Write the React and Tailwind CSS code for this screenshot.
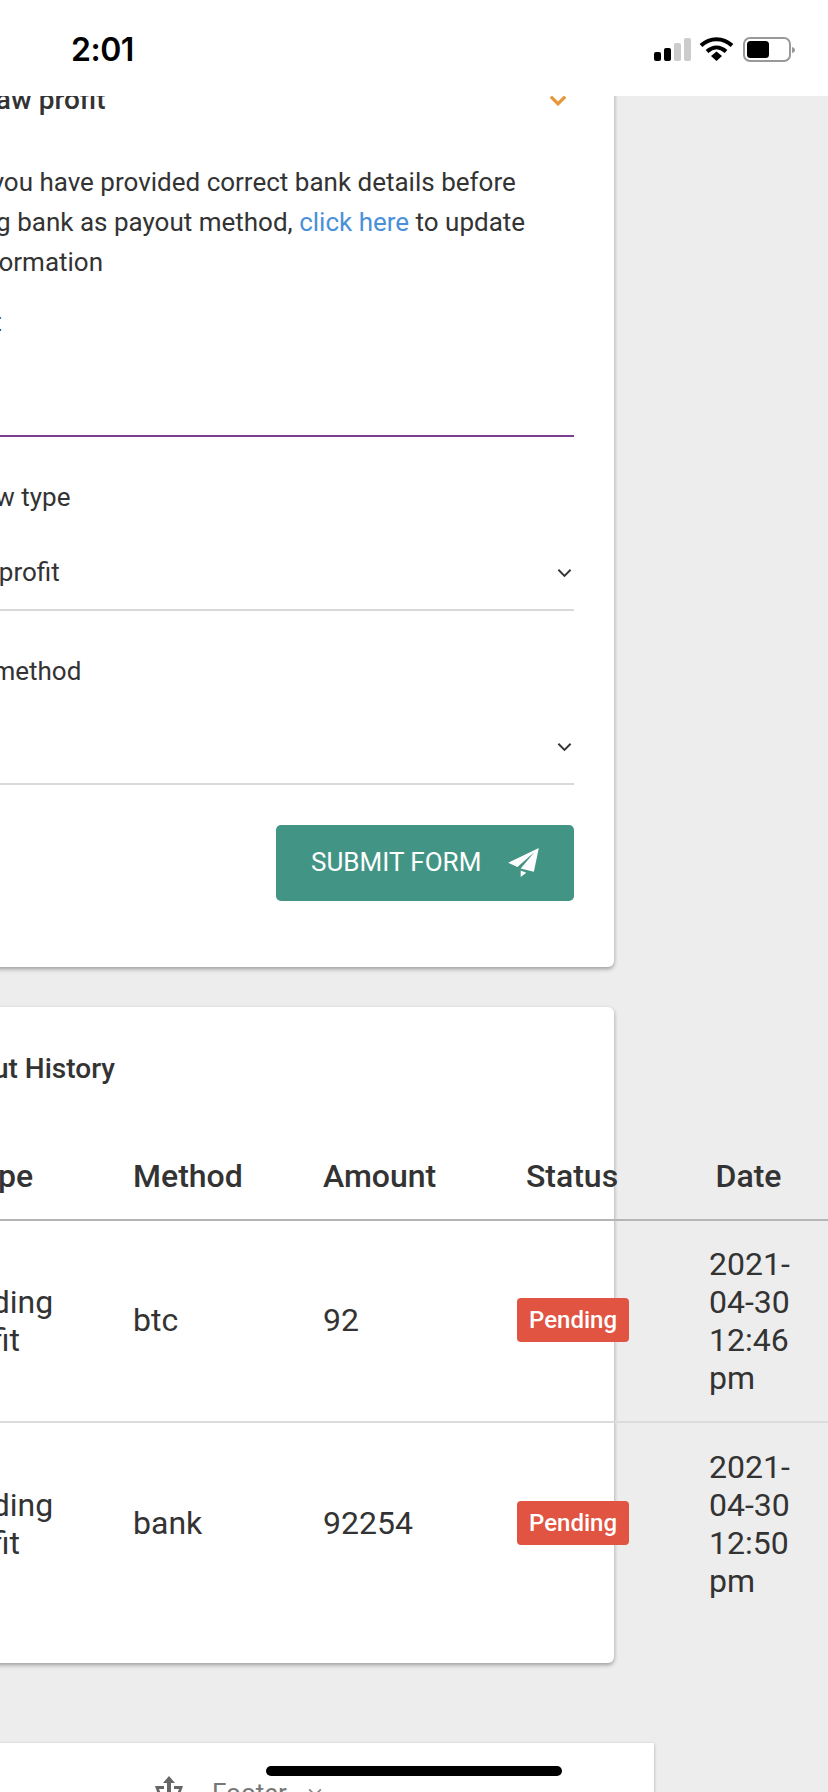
import React from 'react';

const rows = [
  { method: 'btc', amount: '92', time: '12:46' },
  { method: 'bank', amount: '92254', time: '12:50' },
];

function Chevron({ className, strokeWidth = 2 }) {
  return (
    <svg viewBox="0 0 16 10" className={className} fill="none" stroke="currentColor" strokeWidth={strokeWidth}>
      <path d="M1.5 1.5L8 8l6.5-6.5" />
    </svg>
  );
}

function SelectField({ label, value }) {
  return (
    <div>
      <div className="mt-[40px] text-[26px] leading-[40px]">{label}</div>
      <div className="mt-[35px] flex h-[40px] items-center justify-between text-[26px]">
        <span className="ml-[-8px]">{value}</span>
        <Chevron className="mt-[2px] mr-[2px] h-[10px] w-[15px]" />
      </div>
      <div className="mt-[17px] h-[2px] bg-[#d9d9d9]" />
    </div>
  );
}

function StatusBar() {
  return (
    <div className="absolute top-0 left-0 z-10 flex h-[96px] w-full items-start justify-between bg-white pl-[71px] pr-[32px]">
      <span className="mt-[29px] font-['Inter',sans-serif] text-[32px] leading-[42px] font-semibold tracking-[-0.5px] text-black">2:01</span>
      <svg viewBox="0 0 142 26" className="mt-[37px] h-[26px] w-[142px]">
        <rect x="0" y="15" width="7" height="9" rx="2" fill="#000" />
        <rect x="10" y="11" width="7" height="13" rx="2" fill="#000" />
        <rect x="20" y="6" width="7" height="18" rx="2" fill="#ccc" />
        <rect x="30" y="1" width="7" height="23" rx="2" fill="#ccc" />
        <path d="M47 8.5C56 0 69 0 78 8.5" fill="none" stroke="#000" strokeWidth="4" />
        <path d="M53 14.5C59 9 66 9 72 14.5" fill="none" stroke="#000" strokeWidth="4" />
        <path d="M57 19L62.5 14.5L68 19L62.5 24Z" fill="#000" />
        <rect x="90" y="1" width="46" height="23" rx="6" fill="#fff" stroke="#999" strokeWidth="2" />
        <rect x="93" y="4" width="22" height="17" rx="3.5" fill="#000" />
        <path d="M138 10c2 .5 3 1.5 3 3s-1 2.500-3 3z" fill="#999" />
      </svg>
    </div>
  );
}

export default function App() {
  return (
    <div className="relative h-[1792px] w-[828px] overflow-hidden bg-[#ededed] font-['Roboto',sans-serif] text-[#333]">
      <StatusBar />

      <div className="ml-[-200px] pt-[40px]">
        {/* Withdraw form */}
        <div className="w-[814px] rounded-[6px] bg-white pt-[40px] pr-[40px] pb-[66px] pl-[106px] shadow-[0_2px_4px_rgba(0,0,0,0.35)]">
          <div className="flex h-[40px] items-center justify-between">
            <span className="ml-[8px] text-[28px] font-medium">Withdraw profit</span>
            <Chevron className="mr-[7px] h-[11px] w-[18px] text-[#e8963a]" strokeWidth={3} />
          </div>

          <p className="mt-[42px] text-[26px] leading-[40px]">
            Ensure you have provided correct bank details before
            <br />
            selecting bank as payout method, <a className="text-[#4a90d9]">click here</a> to update
            <br />
            bank information
          </p>

          <div className="mt-[20px] ml-[4px] text-[26px] leading-[40px]">Amount</div>
          <div className="h-[95px] border-b-2 border-[#7b3f8f]" />

          <SelectField label="Withdraw type" value="Pending profit" />
          <SelectField label="Payout method" value="" />

          <div className="mt-[40px] flex justify-end">
            <button className="flex h-[76px] w-[298px] items-center justify-between rounded-[5px] bg-[#429585] pr-[35px] pb-[2px] pl-[35px] text-[26px] text-white">
              SUBMIT FORM
              <svg viewBox="0 0 93 88" className="h-[29px] w-[31px]" fill="#fff">
                <path d="M93 0L0 45l28 13L80 12 38 62l40 10z" />
                <path d="M38 68v20l17-13z" />
              </svg>
            </button>
          </div>
        </div>

        {/* Payout history */}
        <div className="mt-[40px] h-[656px] w-[814px] rounded-[6px] bg-white shadow-[0_2px_4px_rgba(0,0,0,0.35)]">
          <div className="pt-[42px] pl-[131px] text-[28px] leading-[40px] font-medium">Payout History</div>
          <table className="mt-[47px] w-[1058px] table-fixed border-collapse text-left text-[32px] leading-[38px]">
            <colgroup>
              <col className="w-[313px]" />
              <col className="w-[190px]" />
              <col className="w-[202px]" />
              <col className="w-[136px]" />
              <col className="w-[217px]" />
            </colgroup>
            <thead>
              <tr className="h-[84px] border-b-2 border-[#b5b5b5]">
                <th className="pb-[4px] pl-[164px] font-medium">Type</th>
                <th className="pb-[4px] pl-[20px] font-medium">Method</th>
                <th className="pb-[4px] pl-[20px] font-medium">Amount</th>
                <th className="pr-[2px] pb-[4px] text-center font-medium">Status</th>
                <th className="pr-[2px] pb-[4px] text-center font-medium">Date</th>
              </tr>
            </thead>
            <tbody>
              {rows.map((row) => (
                <tr key={row.method} className="h-[202px] border-b-2 border-[#dcdcdc] last:border-b-0">
                  <td className="pl-[137px]">
                    Pending
                    <br />
                    <span className="ml-[8px]">profit</span>
                  </td>
                  <td className="pb-[2px] pl-[20px]">{row.method}</td>
                  <td className="pb-[2px] pl-[20px]">{row.amount}</td>
                  <td className="pb-[2px] text-center">
                    <span className="inline-block h-[44px] w-[112px] rounded-[4px] bg-[#e05441] text-center text-[24px] leading-[44px] font-medium text-white">Pending</span>
                  </td>
                  <td className="pl-[68px]">
                    2021-
                    <br />
                    04-30
                    <br />
                    {row.time}
                    <br />
                    pm
                  </td>
                </tr>
              ))}
            </tbody>
          </table>
        </div>

        {/* Footer */}
        <div className="mt-[80px] flex h-[100px] w-[854px] items-start bg-white pt-[30px] pl-[355px] text-[#777] shadow-[0_1px_3px_rgba(0,0,0,0.3)]">
          <svg viewBox="0 0 28 30" className="mt-[3px] h-[30px] w-[28px]" fill="#666">
            <path d="M14 0l6 7h-4v9h-4V7H8z" />
            <path d="M0 10h9v3H4l3 8h14l3-8h-5v-3h9l-5 14H5z" />
            <path d="M7 25h14v4H7z" />
          </svg>
          <span className="ml-[29px] text-[26px] leading-[40px]">Footer</span>
          <Chevron className="mt-[15px] ml-[20px] h-[9px] w-[16px] text-[#888]" />
        </div>
      </div>

      <div className="absolute top-[1766px] left-[266px] z-10 h-[10px] w-[296px] rounded-full bg-black" />
    </div>
  );
}
